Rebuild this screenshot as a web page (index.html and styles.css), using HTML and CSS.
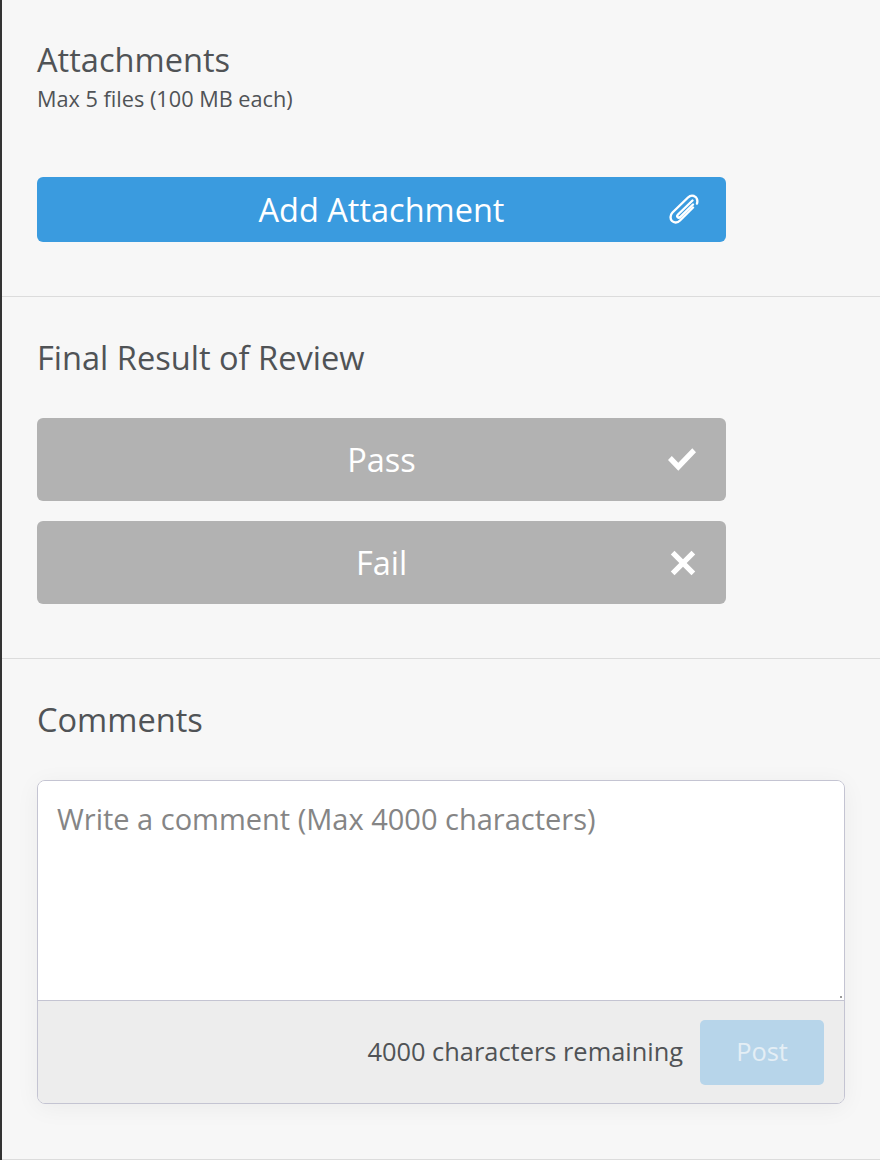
FILE: index.html
```html
<!DOCTYPE html>
<html lang="en">

<head>
    <meta charset="UTF-8">
    <meta name="viewport" content="width=device-width, initial-scale=1.0">
    <title>Review</title>
    <link rel="stylesheet" href="styles.css">
</head>

<body>
    <div class="panel">
        <section class="section attachments">
            <h2 class="title">Attachments</h2>
            <p class="hint">Max 5 files (100 MB each)</p>
            <button class="btn btn-blue">
                <span>Add Attachment</span>
                <svg class="icon clip" viewBox="0 0 30 30" fill="none" stroke="#fff" stroke-width="2.4" stroke-linecap="round" stroke-linejoin="round">
                    <path d="M28 9.500C29 6 27.500 3 25 2 22.800 1.200 20.500 2 19 3.500L3.500 18.500C1 21 1 25 3 27 5 29 8.500 29 11 26.500L24 13.500"/>
                    <path d="M23.500 6.500 9 20.500C8 21.500 8 22.500 8.700 23.200 9.400 23.900 10.400 23.700 11.200 23L24 10.500"/>
                </svg>
            </button>
        </section>

        <section class="section result">
            <h2 class="title">Final Result of Review</h2>
            <button class="btn btn-grey">
                <span>Pass</span>
                <svg class="icon check" viewBox="0 0 30 24" fill="#fff" preserveAspectRatio="none">
                    <path d="M1 12.500 4.800 8.700 11.300 15.200 25.300 1.200 29 5 11.300 22.800z"/>
                </svg>
            </button>
            <button class="btn btn-grey">
                <span>Fail</span>
                <svg class="icon cross" viewBox="0 0 26 26" fill="#fff">
                    <path d="M4.500 .8 13 9.300 21.500 .8 25.200 4.500 16.700 13 25.200 21.500 21.500 25.200 13 16.700 4.500 25.200 .8 21.500 9.300 13 .8 4.500z"/>
                </svg>
            </button>
        </section>

        <section class="section comments">
            <h2 class="title">Comments</h2>
            <div class="comment-box">
                <textarea class="comment-input" placeholder="Write a comment (Max 4000 characters)"></textarea>
                <span class="grip"></span>
                <div class="comment-foot">
                    <span class="remaining">4000 characters remaining</span>
                    <button class="post" disabled>Post</button>
                </div>
            </div>
        </section>
    </div>
</body>

</html>
```

FILE: styles.css
```css
html,
body {
    margin: 0;
    padding: 0;
}

body {
    background-color: #f7f7f7;
    font-family: "Open Sans", "Liberation Sans", sans-serif;
    color: #505356;
}

.panel {
    height: 1160px;
    box-sizing: border-box;
    border-left: 2px solid #333333;
    overflow: hidden;
}

.section {
    box-sizing: border-box;
    padding: 0 35px;
    border-bottom: 1px solid #dcdcdc;
}

.attachments {
    height: 297px;
    padding-top: 39px;
}

.result {
    height: 362px;
    padding-top: 40px;
}

.comments {
    height: 501px;
    padding-top: 40px;
}

.title {
    margin: 0;
    font-size: 32.6px;
    line-height: 41px;
    font-weight: 400;
}

.hint {
    margin: 6px 0 0;
    font-size: 21.7px;
    line-height: 26px;
}

.btn {
    position: relative;
    display: flex;
    align-items: center;
    justify-content: center;
    width: 689px;
    padding: 0;
    border: 0;
    border-radius: 6px;
    color: #ffffff;
    font-family: inherit;
    font-size: 32.5px;
}

.btn-blue {
    height: 65px;
    margin-top: 65px;
    background-color: #3a9bdf;
}

.btn-grey {
    height: 83px;
    margin-top: 20px;
    background-color: #b2b2b2;
}

.result .title {
    margin-bottom: 40px;
}

.result .title + .btn {
    margin-top: 0;
}

.icon {
    position: absolute;
}

.clip {
    right: 27px;
    top: 17px;
    width: 30px;
    height: 30px;
}

.check {
    right: 29px;
    top: 29px;
    width: 30px;
    height: 25px;
}

.cross {
    right: 30px;
    top: 29px;
    width: 26px;
    height: 26px;
}

.comment-box {
    position: relative;
    display: flex;
    flex-direction: column;
    width: 808px;
    height: 324px;
    box-sizing: border-box;
    margin-top: 40px;
    border: 1px solid #c4c4d2;
    border-radius: 8px;
    overflow: hidden;
    box-shadow: 0 4px 24px rgba(0, 0, 0, .05);
}

.comment-input {
    display: block;
    height: 220px;
    box-sizing: border-box;
    padding: 19px 19px;
    border: 0;
    border-bottom: 1px solid #c4c4d2;
    outline: 0;
    resize: none;
    background-color: #ffffff;
    font-family: inherit;
    font-size: 29px;
    line-height: 38px;
    color: #505356;
}

.comment-input::placeholder {
    color: #858585;
    opacity: 1;
}

.grip {
    position: absolute;
    top: 215px;
    right: 2px;
    width: 2px;
    height: 2px;
    background-color: #9a9a9a;
}

.comment-foot {
    display: flex;
    flex: 1;
    align-items: center;
    justify-content: flex-end;
    gap: 17px;
    padding-right: 20px;
    background-color: #ededed;
}

.remaining {
    margin-bottom: 2px;
    font-size: 25.4px;
}

.post {
    width: 124px;
    height: 65px;
    padding: 0 0 2px;
    border: 0;
    border-radius: 5px;
    background-color: #b7d5ea;
    color: #e4eef5;
    font-family: inherit;
    font-size: 25.4px;
}
```
